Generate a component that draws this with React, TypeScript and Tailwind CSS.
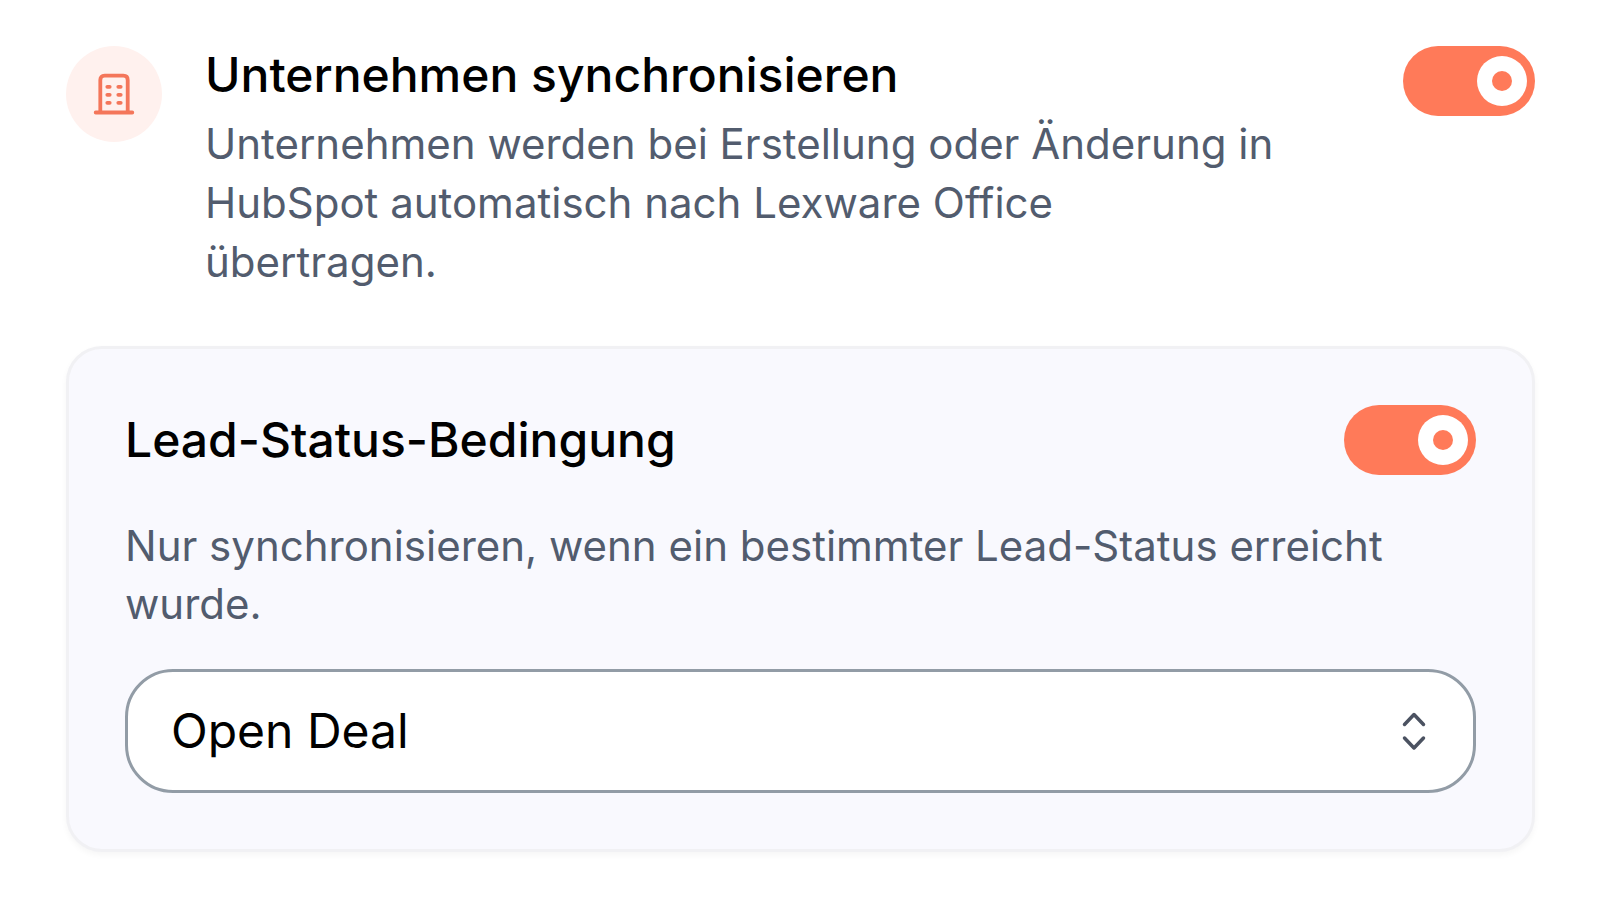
import { useState } from "react"

const App = () => {
  const [syncCompanies, setSyncCompanies] = useState(true)
  const [leadStatusRequired, setLeadStatusRequired] = useState(true)

  return (
    <main className="min-h-screen bg-white pt-[46px] pr-[65px] pb-12 pl-[66px] font-['Inter',sans-serif] text-black">
      <section className="flex items-start gap-[43px]">
        <div className="flex size-24 shrink-0 items-center justify-center rounded-full bg-[#fff1ee]">
          <BuildingIcon />
        </div>
        <div className="flex-1 pr-20">
          <h2 id="sync-title" className="text-[48px] leading-[58px] font-medium">
            Unternehmen synchronisieren
          </h2>
          <p className="mt-[10px] text-[42px] leading-[59px] text-[#525c6e]">
            Unternehmen werden bei Erstellung oder Änderung in HubSpot automatisch nach Lexware Office übertragen.
          </p>
        </div>
        <Toggle labelledBy="sync-title" checked={syncCompanies} onChange={setSyncCompanies} />
      </section>

      <section className="mt-[55px] rounded-[36px] border-3 border-[#f1f1f4] bg-[#f9f9fe] p-14 shadow-[0_3px_6px_rgba(0,0,0,0.04)]">
        <div className="flex items-center justify-between">
          <h3 id="lead-title" className="text-[48px] leading-[58px] font-medium">
            Lead-Status-Bedingung
          </h3>
          <Toggle labelledBy="lead-title" checked={leadStatusRequired} onChange={setLeadStatusRequired} />
        </div>
        <p id="lead-description" className="mt-[42px] text-[42px] leading-[58px] text-[#525c6e]">
          Nur synchronisieren, wenn ein bestimmter Lead-Status erreicht wurde.
        </p>
        <div className="relative mt-9">
          <select
            aria-labelledby="lead-description"
            className="h-[124px] w-full appearance-none rounded-[48px] border-3 border-[#929ca6] bg-white px-[43px] text-[48px] text-black"
          >
            <option>Open Deal</option>
          </select>
          <SelectorIcon />
        </div>
      </section>
    </main>
  )
}

type ToggleProps = {
  labelledBy: string
  checked: boolean
  onChange: (checked: boolean) => void
}

const Toggle = ({ labelledBy, checked, onChange }: ToggleProps) => (
  <button
    type="button"
    role="switch"
    aria-checked={checked}
    aria-labelledby={labelledBy}
    onClick={() => onChange(!checked)}
    className={`flex h-[70px] w-[132px] shrink-0 items-center rounded-full px-2 ${checked ? "justify-end bg-[#ff7a59]" : "justify-start bg-gray-300"}`}
  >
    <span className="flex size-[50px] items-center justify-center rounded-full bg-white">
      <span className={`size-5 rounded-full ${checked ? "bg-[#ff7a59]" : "bg-gray-300"}`} />
    </span>
  </button>
)

const BuildingIcon = () => (
  <svg className="size-[42px]" viewBox="0 0 42 42" fill="none" stroke="#f4765a" strokeLinecap="round" aria-hidden="true">
    <path d="M2.700 39.500h36.600M7.300 39.500V7q0-4.300 4.300-4.300h18.800q4.300 0 4.300 4.300v32.500" strokeWidth="3.8" />
    <path d="M14.300 13.800h2.400M25.300 13.800h2.400M14.300 21.800h2.400M25.300 21.800h2.400M14.300 29.800h2.400M25.300 29.800h2.400" strokeWidth="3.8" />
  </svg>
)

const SelectorIcon = () => (
  <svg
    className="pointer-events-none absolute top-1/2 right-[50px] h-10 w-6 -translate-y-1/2"
    viewBox="0 0 24 40"
    fill="none"
    stroke="#4b5261"
    strokeWidth="3.5"
    strokeLinecap="round"
    strokeLinejoin="round"
    aria-hidden="true"
  >
    <path d="M2.500 13.500 12 3.500l9.500 10M2.500 27 12 37l9.500-10" />
  </svg>
)

export default App
